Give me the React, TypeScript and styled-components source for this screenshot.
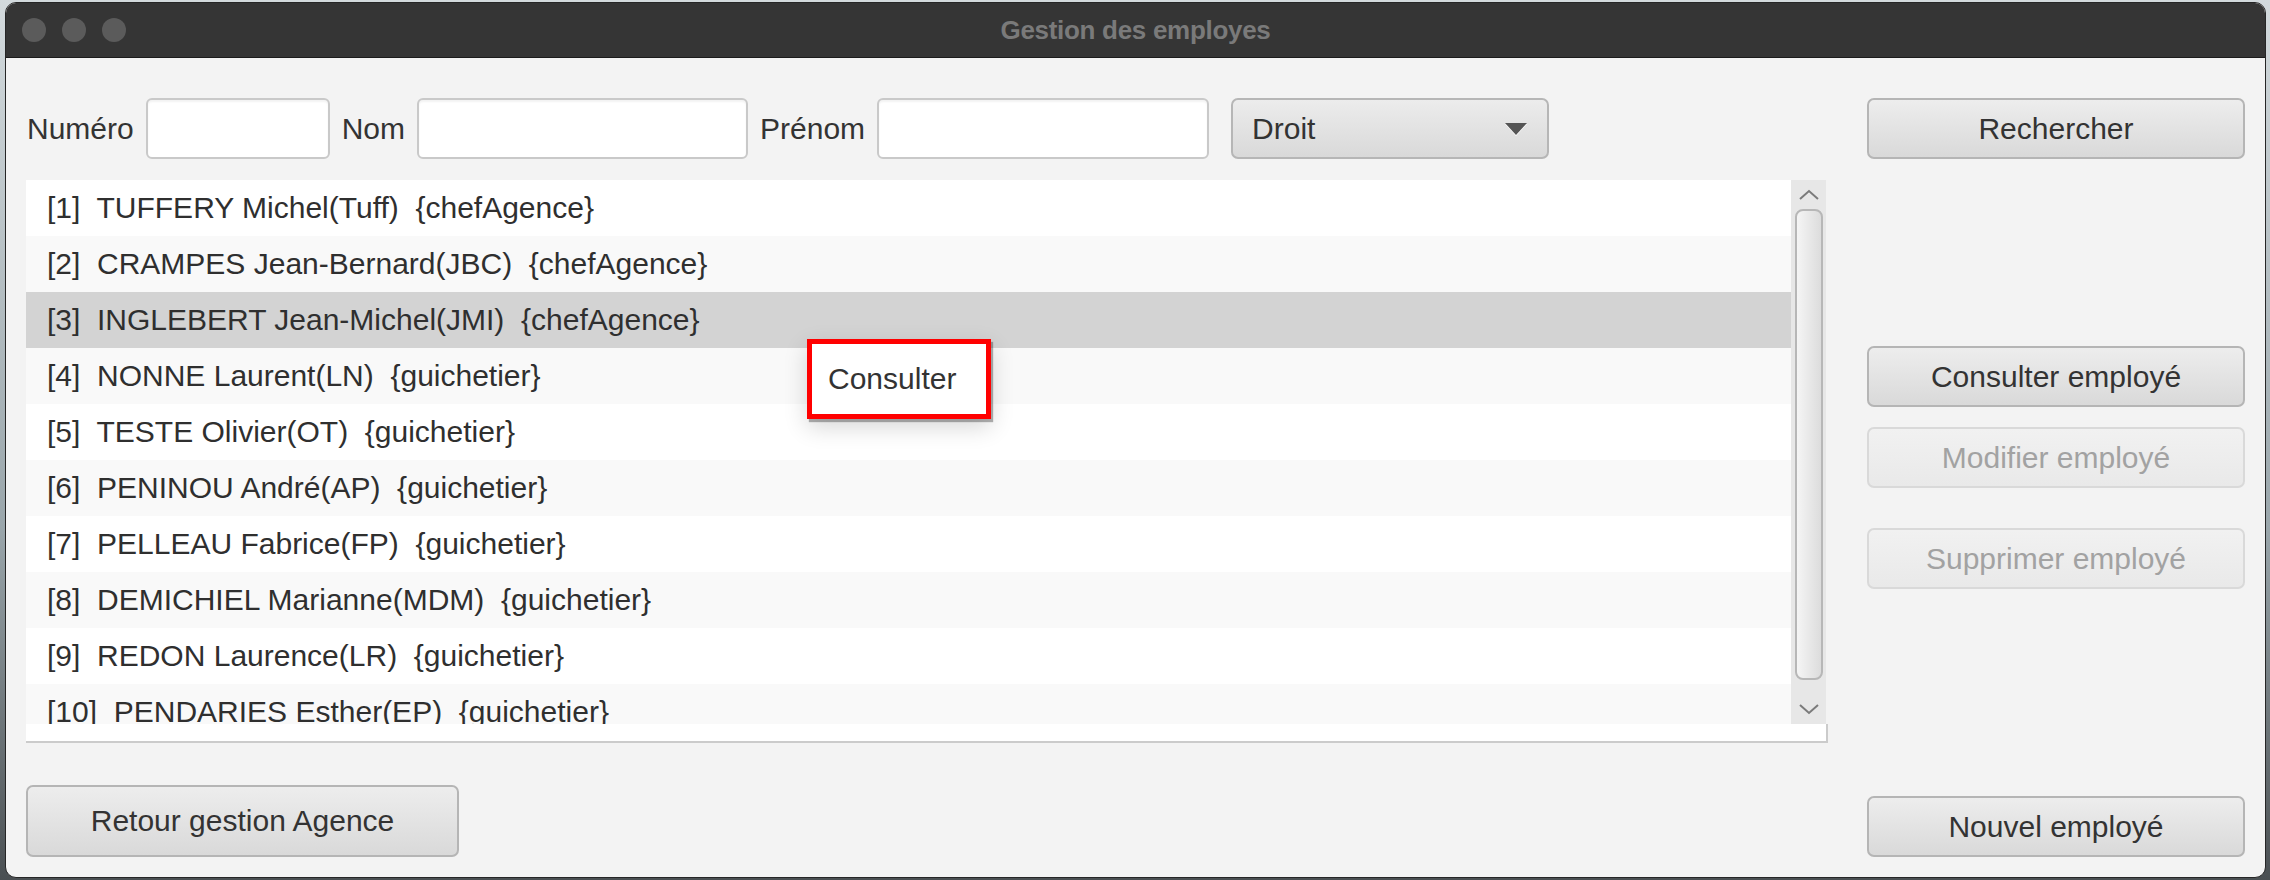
import React from "react";
import styled, { createGlobalStyle } from "styled-components";

const Global = createGlobalStyle`
  html, body { margin: 0; padding: 0; }
  body {
    width: 2270px;
    height: 880px;
    overflow: hidden;
    background: linear-gradient(180deg, #d3dadd 0%, #9aa6ab 60%, #4a4f52 100%);
    font-family: "Liberation Sans", Arial, sans-serif;
  }
`;

const Window = styled.div`
  margin: 2px 0 0 5px;
  width: 2261px;
  height: 876px;
  box-sizing: border-box;
  border: 1px solid #262626;
  border-radius: 11px;
  overflow: hidden;
  background: #f3f3f3;
  display: flex;
  flex-direction: column;
`;

const TitleBar = styled.div`
  flex: none;
  height: 54px;
  background: #353535;
  border-bottom: 1px solid #1b1b1b;
  display: grid;
  grid-template-columns: 1fr auto 1fr;
  align-items: center;
`;

const Lights = styled.div`
  display: flex;
  gap: 16px;
  padding-left: 16px;
`;

const Light = styled.span`
  width: 24px;
  height: 24px;
  border-radius: 50%;
  background: #5b5b5b;
`;

const Title = styled.div`
  font-size: 26px;
  font-weight: bold;
  color: #7a7a7a;
  letter-spacing: -0.3px;
`;

const Content = styled.div`
  flex: 1;
  display: grid;
  grid-template-columns: 1802px 378px;
  column-gap: 39px;
  padding: 40px 20px 20px 20px;
`;

const LeftColumn = styled.div`
  display: flex;
  flex-direction: column;
`;

const RightColumn = styled.div`
  display: flex;
  flex-direction: column;
`;

const SearchRow = styled.div`
  display: flex;
  align-items: center;
  gap: 12px;
  height: 61px;
`;

const Label = styled.span`
  font-size: 30px;
  color: #333;
  margin-left: ${(p: { $first?: boolean }) => (p.$first ? "1px" : "0")};
`;

const Field = styled.div<{ $w: number }>`
  width: ${(p) => p.$w}px;
  height: 61px;
  box-sizing: border-box;
  background: #fff;
  border: 2px solid #c9c9c9;
  border-radius: 6px;
  box-shadow: inset 0 2px 2px rgba(0, 0, 0, 0.05);
`;

const Combo = styled.div`
  width: 318px;
  height: 61px;
  margin-left: 10px;
  box-sizing: border-box;
  border: 2px solid #b6b6b6;
  border-radius: 7px;
  background: linear-gradient(180deg, #ececec, #d9d9d9);
  display: flex;
  align-items: center;
  justify-content: space-between;
  padding: 0 20px 0 19px;
  font-size: 30px;
  color: #333;
`;

const ComboArrow = styled.span`
  width: 0;
  height: 0;
  border-left: 11px solid transparent;
  border-right: 11px solid transparent;
  border-top: 12px solid #555;
  filter: drop-shadow(0 1px 0 #fff);
`;

const ListBox = styled.div`
  position: relative;
  margin-top: 21px;
  display: flex;
  flex-direction: column;
`;

const Viewport = styled.div`
  width: 1800px;
  height: 544px;
  display: flex;
  overflow: hidden;
`;

const Rows = styled.div`
  flex: 1;
  overflow: hidden;
`;

const Row = styled.div<{ $alt: boolean; $selected: boolean }>`
  height: 56px;
  line-height: 56px;
  padding-left: 21px;
  font-size: 30px;
  color: #2f2f2f;
  white-space: pre;
  background: ${(p) => (p.$selected ? "#d3d3d3" : p.$alt ? "#f9f9f9" : "#ffffff")};
`;

const ScrollBar = styled.div`
  width: 35px;
  flex: none;
  background: #e7e7e7;
  display: flex;
  flex-direction: column;
`;

const ArrowBox = styled.div`
  height: 29px;
  flex: none;
  display: flex;
  align-items: center;
  justify-content: center;
`;

const Track = styled.div`
  flex: 1;
  padding: 0 3px 0 4px;
`;

const Thumb = styled.div`
  height: 471px;
  box-sizing: border-box;
  border: 2px solid #b7b7b7;
  border-radius: 8px;
  background: linear-gradient(90deg, #f5f5f5, #dcdcdc);
`;

const BottomStrip = styled.div`
  height: 17px;
  background: #fff;
  border-right: 2px solid #cbcbcb;
  border-bottom: 2px solid #cbcbcb;
`;

const Popup = styled.div`
  position: absolute;
  top: 159px;
  left: 781px;
  width: 184px;
  height: 80px;
  box-sizing: border-box;
  border: 5px solid #ff0000;
  background: #fff;
  display: flex;
  align-items: center;
  padding-left: 16px;
  font-size: 30px;
  color: #333;
  box-shadow: 2px 3px 1px rgba(0, 0, 0, 0.3), 0 8px 22px rgba(0, 0, 0, 0.16);
`;

const Button = styled.div<{ $disabled?: boolean; $h?: number; $mt?: string; $w?: number }>`
  height: ${(p) => p.$h ?? 61}px;
  width: ${(p) => (p.$w ? `${p.$w}px` : "auto")};
  margin-top: ${(p) => p.$mt ?? "0"};
  box-sizing: border-box;
  border: 2px solid ${(p) => (p.$disabled ? "#d9d9d9" : "#b5b5b5")};
  border-radius: 7px;
  background: ${(p) =>
    p.$disabled
      ? "linear-gradient(180deg, #f1f1f1, #e9e9e9)"
      : "linear-gradient(180deg, #ededed, #d9d9d9)"};
  display: flex;
  align-items: center;
  justify-content: center;
  font-size: 30px;
  color: ${(p) => (p.$disabled ? "#a2a2a2" : "#333")};
`;

const Chevron = ({ up }: { up: boolean }) => (
  <svg width="22" height="13" viewBox="0 0 22 13">
    <polyline
      points={up ? "2,11 11,3 20,11" : "2,2 11,10 20,2"}
      fill="none"
      stroke="#7b7b7b"
      strokeWidth="2"
    />
  </svg>
);

const employees = [
  "[1]  TUFFERY Michel(Tuff)  {chefAgence}",
  "[2]  CRAMPES Jean-Bernard(JBC)  {chefAgence}",
  "[3]  INGLEBERT Jean-Michel(JMI)  {chefAgence}",
  "[4]  NONNE Laurent(LN)  {guichetier}",
  "[5]  TESTE Olivier(OT)  {guichetier}",
  "[6]  PENINOU André(AP)  {guichetier}",
  "[7]  PELLEAU Fabrice(FP)  {guichetier}",
  "[8]  DEMICHIEL Marianne(MDM)  {guichetier}",
  "[9]  REDON Laurence(LR)  {guichetier}",
  "[10]  PENDARIES Esther(EP)  {guichetier}",
];

export default function App() {
  return (
    <>
      <Global />
      <Window>
        <TitleBar>
          <Lights>
            <Light />
            <Light />
            <Light />
          </Lights>
          <Title>Gestion des employes</Title>
          <div />
        </TitleBar>
        <Content>
          <LeftColumn>
            <SearchRow>
              <Label $first>Numéro</Label>
              <Field $w={184} />
              <Label>Nom</Label>
              <Field $w={331} />
              <Label>Prénom</Label>
              <Field $w={332} />
              <Combo>
                <span>Droit</span>
                <ComboArrow />
              </Combo>
            </SearchRow>
            <ListBox>
              <Viewport>
                <Rows>
                  {employees.map((e, i) => (
                    <Row key={i} $alt={i % 2 === 1} $selected={i === 2}>
                      {e}
                    </Row>
                  ))}
                </Rows>
                <ScrollBar>
                  <ArrowBox>
                    <Chevron up />
                  </ArrowBox>
                  <Track>
                    <Thumb />
                  </Track>
                  <ArrowBox>
                    <Chevron up={false} />
                  </ArrowBox>
                </ScrollBar>
              </Viewport>
              <BottomStrip />
              <Popup>Consulter</Popup>
            </ListBox>
            <Button $h={72} $w={433} $mt="42px">
              Retour gestion Agence
            </Button>
          </LeftColumn>
          <RightColumn>
            <Button>Rechercher</Button>
            <Button $mt="187px">Consulter employé</Button>
            <Button $mt="20px" $disabled>
              Modifier employé
            </Button>
            <Button $mt="40px" $disabled>
              Supprimer employé
            </Button>
            <Button $mt="auto">Nouvel employé</Button>
          </RightColumn>
        </Content>
      </Window>
    </>
  );
}
